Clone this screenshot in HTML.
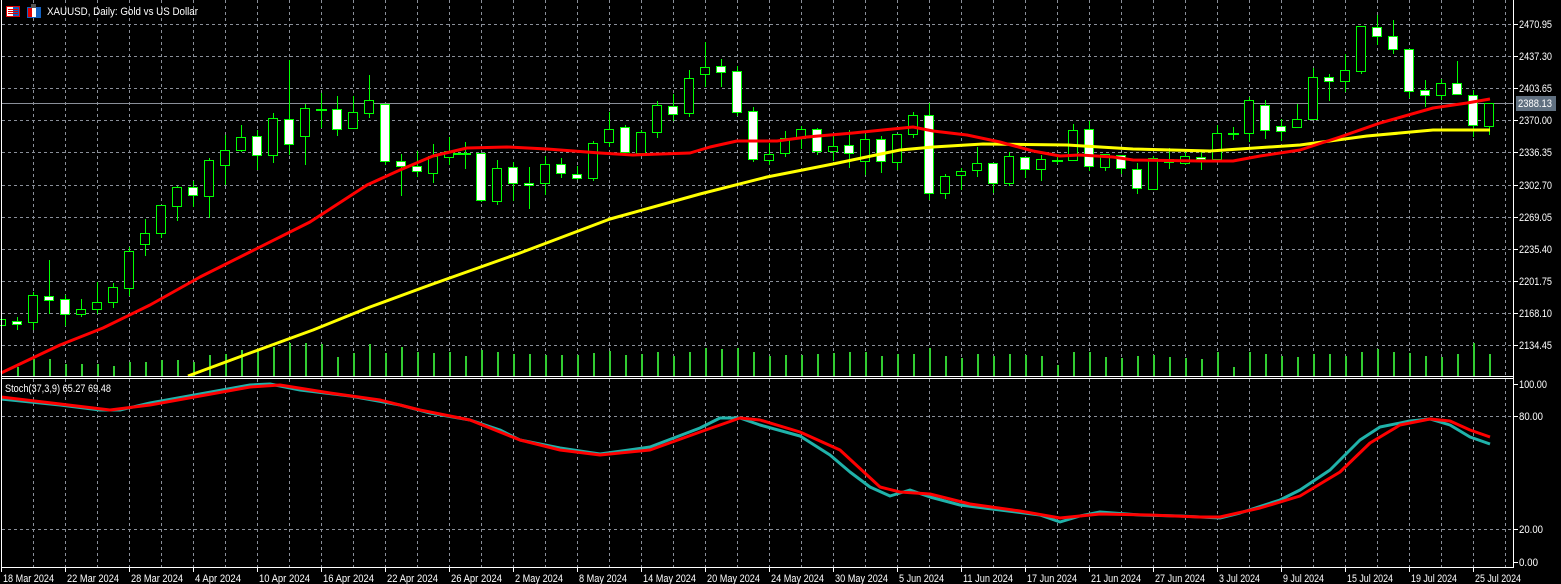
<!DOCTYPE html>
<html><head><meta charset="utf-8"><style>
html,body{margin:0;padding:0;background:#000;width:1561px;height:584px;overflow:hidden}
svg{display:block}
text{font-family:"Liberation Sans",sans-serif;font-size:11px;fill:#fff}
</style></head><body>
<svg width="1561" height="584" viewBox="0 0 1561 584" xmlns="http://www.w3.org/2000/svg" shape-rendering="crispEdges">
<rect width="1561" height="584" fill="#000"/>
<g stroke="#8a8f99" stroke-width="1" stroke-dasharray="3,3">
<path d="M33.5 0V376M65.5 0V376M97.5 0V376M129.5 0V376M161.5 0V376M193.5 0V376M225.5 0V376M257.5 0V376M289.5 0V376M321.5 0V376M353.5 0V376M385.5 0V376M417.5 0V376M449.5 0V376M481.5 0V376M513.5 0V376M545.5 0V376M577.5 0V376M609.5 0V376M641.5 0V376M673.5 0V376M705.5 0V376M737.5 0V376M769.5 0V376M801.5 0V376M833.5 0V376M865.5 0V376M897.5 0V376M929.5 0V376M961.5 0V376M993.5 0V376M1025.5 0V376M1057.5 0V376M1089.5 0V376M1121.5 0V376M1153.5 0V376M1185.5 0V376M1217.5 0V376M1249.5 0V376M1281.5 0V376M1313.5 0V376M1345.5 0V376M1377.5 0V376M1409.5 0V376M1441.5 0V376M1473.5 0V376M1505.5 0V376"/>
<path d="M33.5 379V567M65.5 379V567M97.5 379V567M129.5 379V567M161.5 379V567M193.5 379V567M225.5 379V567M257.5 379V567M289.5 379V567M321.5 379V567M353.5 379V567M385.5 379V567M417.5 379V567M449.5 379V567M481.5 379V567M513.5 379V567M545.5 379V567M577.5 379V567M609.5 379V567M641.5 379V567M673.5 379V567M705.5 379V567M737.5 379V567M769.5 379V567M801.5 379V567M833.5 379V567M865.5 379V567M897.5 379V567M929.5 379V567M961.5 379V567M993.5 379V567M1025.5 379V567M1057.5 379V567M1089.5 379V567M1121.5 379V567M1153.5 379V567M1185.5 379V567M1217.5 379V567M1249.5 379V567M1281.5 379V567M1313.5 379V567M1345.5 379V567M1377.5 379V567M1409.5 379V567M1441.5 379V567M1473.5 379V567M1505.5 379V567"/>
<path d="M2 24.5H1513M2 56.5H1513M2 88.5H1513M2 120.5H1513M2 152.5H1513M2 185.5H1513M2 217.5H1513M2 249.5H1513M2 281.5H1513M2 313.5H1513M2 345.5H1513M2 416.5H1513M2 529.5H1513"/>
</g>
<path d="M2 103.5H1513" stroke="#8a8f99" stroke-width="1"/>
<g fill="#32cd32">
<rect x="17" y="367" width="2" height="9"/><rect x="33" y="359" width="2" height="17"/><rect x="49" y="359" width="2" height="17"/><rect x="65" y="364" width="2" height="12"/><rect x="81" y="364" width="2" height="12"/><rect x="97" y="364" width="2" height="12"/><rect x="113" y="366" width="2" height="10"/><rect x="129" y="362" width="2" height="14"/><rect x="145" y="362" width="2" height="14"/><rect x="161" y="360" width="2" height="16"/><rect x="177" y="360" width="2" height="16"/><rect x="193" y="362" width="2" height="14"/><rect x="209" y="355" width="2" height="21"/><rect x="225" y="354" width="2" height="22"/><rect x="241" y="350" width="2" height="26"/><rect x="257" y="350" width="2" height="26"/><rect x="273" y="347" width="2" height="29"/><rect x="289" y="343" width="2" height="33"/><rect x="305" y="343" width="2" height="33"/><rect x="321" y="344" width="2" height="32"/><rect x="337" y="357" width="2" height="19"/><rect x="353" y="353" width="2" height="23"/><rect x="369" y="344" width="2" height="32"/><rect x="385" y="353" width="2" height="23"/>
<rect x="401" y="347" width="2" height="29"/><rect x="417" y="352" width="2" height="24"/><rect x="433" y="353" width="2" height="23"/><rect x="449" y="352" width="2" height="24"/><rect x="465" y="356" width="2" height="20"/><rect x="481" y="350" width="2" height="26"/><rect x="497" y="352" width="2" height="24"/><rect x="513" y="354" width="2" height="22"/><rect x="529" y="354" width="2" height="22"/><rect x="545" y="355" width="2" height="21"/><rect x="561" y="355" width="2" height="21"/><rect x="577" y="355" width="2" height="21"/><rect x="593" y="353" width="2" height="23"/><rect x="609" y="351" width="2" height="25"/><rect x="625" y="355" width="2" height="21"/><rect x="641" y="354" width="2" height="22"/><rect x="657" y="352" width="2" height="24"/><rect x="673" y="356" width="2" height="20"/><rect x="689" y="352" width="2" height="24"/><rect x="705" y="348" width="2" height="28"/><rect x="721" y="349" width="2" height="27"/><rect x="737" y="348" width="2" height="28"/><rect x="753" y="352" width="2" height="24"/><rect x="769" y="356" width="2" height="20"/><rect x="785" y="355" width="2" height="21"/><rect x="801" y="355" width="2" height="21"/><rect x="817" y="354" width="2" height="22"/><rect x="833" y="353" width="2" height="23"/><rect x="849" y="352" width="2" height="24"/><rect x="865" y="352" width="2" height="24"/><rect x="881" y="356" width="2" height="20"/><rect x="897" y="354" width="2" height="22"/><rect x="913" y="354" width="2" height="22"/><rect x="929" y="348" width="2" height="28"/><rect x="945" y="356" width="2" height="20"/><rect x="961" y="358" width="2" height="18"/><rect x="977" y="354" width="2" height="22"/><rect x="993" y="356" width="2" height="20"/><rect x="1009" y="354" width="2" height="22"/><rect x="1025" y="355" width="2" height="21"/><rect x="1041" y="356" width="2" height="20"/><rect x="1057" y="365" width="2" height="11"/><rect x="1073" y="352" width="2" height="24"/><rect x="1089" y="352" width="2" height="24"/><rect x="1105" y="357" width="2" height="19"/><rect x="1121" y="358" width="2" height="18"/><rect x="1137" y="356" width="2" height="20"/><rect x="1153" y="355" width="2" height="21"/><rect x="1169" y="357" width="2" height="19"/><rect x="1185" y="358" width="2" height="18"/><rect x="1201" y="359" width="2" height="17"/><rect x="1217" y="352" width="2" height="24"/><rect x="1233" y="367" width="2" height="9"/><rect x="1249" y="352" width="2" height="24"/><rect x="1265" y="354" width="2" height="22"/><rect x="1281" y="356" width="2" height="20"/><rect x="1297" y="357" width="2" height="19"/><rect x="1313" y="354" width="2" height="22"/><rect x="1329" y="354" width="2" height="22"/><rect x="1345" y="356" width="2" height="20"/><rect x="1361" y="352" width="2" height="24"/><rect x="1377" y="349" width="2" height="27"/><rect x="1393" y="352" width="2" height="24"/><rect x="1409" y="353" width="2" height="23"/><rect x="1425" y="356" width="2" height="20"/><rect x="1441" y="357" width="2" height="19"/><rect x="1457" y="354" width="2" height="22"/><rect x="1473" y="343" width="2" height="33"/><rect x="1489" y="354" width="2" height="22"/>
</g>
<path stroke="#00ff00" stroke-width="1" fill="none" d="M1.5 318V326M17.5 317V330M33.5 292V330M49.5 260V314M65.5 295V326M81.5 299V317M97.5 282V314M113.5 283V308M129.5 247V296M145.5 219V256M161.5 205V238M177.5 186V221M193.5 181V207M209.5 158V218M225.5 135V185M241.5 125V152M257.5 130V170M273.5 113V163M289.5 60V155M305.5 104V165M321.5 93V128M337.5 96V136M353.5 96V128M369.5 75V118M385.5 104V165M401.5 154V196M417.5 151V177M433.5 144V183M449.5 137V165M465.5 142V169M481.5 153V202M497.5 160V205M513.5 162V201M529.5 167V209M545.5 156V195M561.5 158V178M577.5 166V180M593.5 141V181M609.5 112V147M625.5 125V156M641.5 130V154M657.5 101V138M673.5 94V121M689.5 70V117M705.5 42V87M721.5 59V87M737.5 66V116M753.5 107V162M769.5 143V165M785.5 131V157M801.5 126V149M817.5 128V155M833.5 136V161M849.5 130V168M865.5 134V175M881.5 136V173M897.5 134V170M913.5 112V138M929.5 103V200M945.5 174V199M961.5 168V190M977.5 147V177M993.5 163V193M1009.5 152V186M1025.5 157V178M1041.5 155V181M1057.5 155V164M1073.5 124V160M1089.5 121V171M1105.5 154V171M1121.5 155V174M1137.5 163V194M1153.5 156V190M1169.5 148V169M1185.5 152V165M1201.5 152V170M1217.5 125V160M1233.5 127V140M1249.5 97V142M1265.5 100V139M1281.5 119V141M1297.5 104V128M1313.5 68V119M1329.5 74V101M1345.5 54V92M1361.5 26V74M1377.5 15V45M1393.5 20V54M1409.5 49V98M1425.5 80V107M1441.5 79V100M1457.5 61V95M1473.5 90V137M1489.5 103V135"/>
<path stroke="#00ff00" stroke-width="2" d="M316 110H327M452 154H471M1052 161H1063M1228 134H1239"/>
<g stroke="#00ff00" stroke-width="1" fill="#000">
<rect x="-3.5" y="319.5" width="9" height="6"/><rect x="28.5" y="295.5" width="9" height="27"/><rect x="76.5" y="309.5" width="9" height="5"/><rect x="92.5" y="302.5" width="9" height="7"/><rect x="108.5" y="287.5" width="9" height="15"/><rect x="124.5" y="251.5" width="9" height="37"/><rect x="140.5" y="233.5" width="9" height="11"/><rect x="156.5" y="205.5" width="9" height="28"/><rect x="172.5" y="187.5" width="9" height="19"/><rect x="204.5" y="160.5" width="9" height="36"/><rect x="220.5" y="150.5" width="9" height="15"/><rect x="236.5" y="137.5" width="9" height="13"/><rect x="268.5" y="118.5" width="9" height="37"/><rect x="300.5" y="108.5" width="9" height="28"/><rect x="348.5" y="112.5" width="9" height="16"/><rect x="364.5" y="100.5" width="9" height="13"/><rect x="428.5" y="156.5" width="9" height="17"/><rect x="444.5" y="151.5" width="9" height="6"/><rect x="492.5" y="168.5" width="9" height="33"/><rect x="540.5" y="164.5" width="9" height="19"/><rect x="588.5" y="143.5" width="9" height="35"/><rect x="604.5" y="129.5" width="9" height="13"/><rect x="636.5" y="132.5" width="9" height="21"/><rect x="652.5" y="105.5" width="9" height="27"/><rect x="684.5" y="78.5" width="9" height="35"/><rect x="700.5" y="67.5" width="9" height="7"/><rect x="764.5" y="154.5" width="9" height="6"/><rect x="780.5" y="138.5" width="9" height="15"/><rect x="796.5" y="129.5" width="9" height="9"/><rect x="828.5" y="146.5" width="9" height="5"/><rect x="860.5" y="139.5" width="9" height="22"/><rect x="892.5" y="134.5" width="9" height="28"/><rect x="908.5" y="115.5" width="9" height="19"/><rect x="940.5" y="176.5" width="9" height="17"/><rect x="956.5" y="171.5" width="9" height="4"/><rect x="972.5" y="163.5" width="9" height="7"/><rect x="1004.5" y="156.5" width="9" height="27"/><rect x="1036.5" y="159.5" width="9" height="10"/><rect x="1068.5" y="130.5" width="9" height="30"/><rect x="1100.5" y="154.5" width="9" height="13"/><rect x="1148.5" y="158.5" width="9" height="31"/><rect x="1164.5" y="159.5" width="9" height="3"/><rect x="1180.5" y="156.5" width="9" height="7"/><rect x="1212.5" y="133.5" width="9" height="26"/><rect x="1244.5" y="100.5" width="9" height="33"/><rect x="1292.5" y="119.5" width="9" height="8"/><rect x="1308.5" y="77.5" width="9" height="42"/><rect x="1340.5" y="70.5" width="9" height="11"/><rect x="1356.5" y="26.5" width="9" height="45"/><rect x="1436.5" y="83.5" width="9" height="12"/><rect x="1484.5" y="103.5" width="9" height="23"/>
</g>
<g stroke="#00ff00" stroke-width="1" fill="#fff">
<rect x="12.5" y="321.5" width="9" height="3"/><rect x="44.5" y="296.5" width="9" height="4"/><rect x="60.5" y="299.5" width="9" height="15"/><rect x="188.5" y="187.5" width="9" height="8"/><rect x="252.5" y="136.5" width="9" height="19"/><rect x="284.5" y="119.5" width="9" height="25"/><rect x="332.5" y="109.5" width="9" height="20"/><rect x="380.5" y="104.5" width="9" height="57"/><rect x="396.5" y="161.5" width="9" height="5"/><rect x="412.5" y="166.5" width="9" height="5"/><rect x="476.5" y="153.5" width="9" height="47"/><rect x="508.5" y="167.5" width="9" height="16"/><rect x="524.5" y="183.5" width="9" height="2"/><rect x="556.5" y="164.5" width="9" height="9"/><rect x="572.5" y="174.5" width="9" height="4"/><rect x="620.5" y="127.5" width="9" height="25"/><rect x="668.5" y="106.5" width="9" height="8"/><rect x="716.5" y="66.5" width="9" height="6"/><rect x="732.5" y="71.5" width="9" height="41"/><rect x="748.5" y="111.5" width="9" height="48"/><rect x="812.5" y="129.5" width="9" height="22"/><rect x="844.5" y="145.5" width="9" height="8"/><rect x="876.5" y="139.5" width="9" height="22"/><rect x="924.5" y="115.5" width="9" height="78"/><rect x="988.5" y="163.5" width="9" height="20"/><rect x="1020.5" y="157.5" width="9" height="12"/><rect x="1084.5" y="129.5" width="9" height="37"/><rect x="1116.5" y="155.5" width="9" height="13"/><rect x="1132.5" y="169.5" width="9" height="19"/><rect x="1196.5" y="157.5" width="9" height="2"/><rect x="1260.5" y="105.5" width="9" height="25"/><rect x="1276.5" y="126.5" width="9" height="5"/><rect x="1324.5" y="77.5" width="9" height="4"/><rect x="1372.5" y="27.5" width="9" height="9"/><rect x="1388.5" y="36.5" width="9" height="13"/><rect x="1404.5" y="49.5" width="9" height="42"/><rect x="1420.5" y="90.5" width="9" height="5"/><rect x="1452.5" y="83.5" width="9" height="11"/><rect x="1468.5" y="95.5" width="9" height="30"/>
</g>
<g fill="none" stroke-width="3" shape-rendering="auto" stroke-linejoin="round">
<polyline stroke="#ffff00" points="188,376 250,353 313,330 370,307 430,285 520,253 610,219 700,194 767,177 833,164 900,150 933,147 983,144 1067,145 1133,149 1210,151 1300,145 1367,136 1433,130 1490,130"/>
<polyline stroke="#ff0000" points="1,373 60,345 103,328 150,305 200,277 250,252 310,222 367,185 400,170 433,156 467,148 507,147 547,149 600,153 633,155 690,153 710,147 737,141 777,141 807,137 853,133 913,127 933,131 967,135 1000,142 1033,151 1060,156 1080,155 1113,157 1133,160 1200,161 1233,161 1260,156 1300,150 1340,137 1380,123 1433,108 1467,103 1490,99"/>
</g>
<g fill="none" stroke-width="3" shape-rendering="auto" stroke-linejoin="round">
<polyline stroke="#20b2aa" points="1,399 60,405 100,410 120,410 150,403 200,394 250,385 270,384 300,390 350,396 400,405 430,413 470,420 500,430 520,440 560,448 600,454 650,447 700,428 720,418 740,418 760,425 800,436 830,455 850,472 870,487 890,496 910,490 930,497 960,505 1000,510 1040,515 1060,522 1080,516 1100,512 1140,515 1180,516 1220,518 1240,513 1280,500 1300,490 1330,470 1360,440 1380,427 1410,421 1430,419 1450,425 1470,437 1490,444"/>
<polyline stroke="#ff0000" points="1,397 60,404 110,410 150,405 200,396 250,387 280,385 330,393 380,400 420,410 470,420 520,440 560,450 600,455 650,450 700,432 740,418 760,420 800,432 840,450 880,487 900,492 930,494 970,504 1020,511 1060,518 1100,514 1150,515 1200,517 1220,517 1260,508 1300,496 1340,472 1370,443 1400,425 1430,419 1450,421 1470,430 1490,437"/>
</g>
<g stroke="#fff" stroke-width="1">
<path d="M1.5 0V568M1513.5 0V568M1 376.5H1514M1 378.5H1514M1 567.5H1514"/>
<path d="M1514 24.5H1518M1514 56.5H1518M1514 88.5H1518M1514 120.5H1518M1514 152.5H1518M1514 185.5H1518M1514 217.5H1518M1514 249.5H1518M1514 281.5H1518M1514 313.5H1518M1514 345.5H1518M1514 384.5H1518M1514 416.5H1518M1514 529.5H1518M1514 562.5H1518"/>
<path d="M1.5 568V572M65.5 568V572M129.5 568V572M193.5 568V572M257.5 568V572M321.5 568V572M385.5 568V572M449.5 568V572M513.5 568V572M577.5 568V572M641.5 568V572M705.5 568V572M769.5 568V572M833.5 568V572M897.5 568V572M961.5 568V572M1025.5 568V572M1089.5 568V572M1153.5 568V572M1217.5 568V572M1281.5 568V572M1345.5 568V572M1409.5 568V572M1473.5 568V572"/>
</g>
<g lengthAdjust="spacingAndGlyphs">
<text x="1519" y="28" textLength="33" lengthAdjust="spacingAndGlyphs">2470.95</text><text x="1519" y="60" textLength="33" lengthAdjust="spacingAndGlyphs">2437.30</text><text x="1519" y="92" textLength="33" lengthAdjust="spacingAndGlyphs">2403.65</text><text x="1519" y="124" textLength="33" lengthAdjust="spacingAndGlyphs">2370.00</text><text x="1519" y="156" textLength="33" lengthAdjust="spacingAndGlyphs">2336.35</text><text x="1519" y="189" textLength="33" lengthAdjust="spacingAndGlyphs">2302.70</text><text x="1519" y="221" textLength="33" lengthAdjust="spacingAndGlyphs">2269.05</text><text x="1519" y="253" textLength="33" lengthAdjust="spacingAndGlyphs">2235.40</text><text x="1519" y="285" textLength="33" lengthAdjust="spacingAndGlyphs">2201.75</text><text x="1519" y="317" textLength="33" lengthAdjust="spacingAndGlyphs">2168.10</text><text x="1519" y="349" textLength="33" lengthAdjust="spacingAndGlyphs">2134.45</text>
<text x="1519" y="388" textLength="28" lengthAdjust="spacingAndGlyphs">100.00</text><text x="1519" y="420" textLength="24" lengthAdjust="spacingAndGlyphs">80.00</text><text x="1519" y="533" textLength="24" lengthAdjust="spacingAndGlyphs">20.00</text><text x="1519" y="566" textLength="19" lengthAdjust="spacingAndGlyphs">0.00</text>
</g>
<rect x="1516" y="96" width="40" height="15" fill="#607080"/>
<text x="1518" y="107" textLength="34" lengthAdjust="spacingAndGlyphs">2388.13</text>
<g>
<text x="3" y="582" textLength="51" lengthAdjust="spacingAndGlyphs">18 Mar 2024</text><text x="67" y="582" textLength="52" lengthAdjust="spacingAndGlyphs">22 Mar 2024</text><text x="131" y="582" textLength="52" lengthAdjust="spacingAndGlyphs">28 Mar 2024</text><text x="195" y="582" textLength="46" lengthAdjust="spacingAndGlyphs">4 Apr 2024</text><text x="259" y="582" textLength="51" lengthAdjust="spacingAndGlyphs">10 Apr 2024</text><text x="323" y="582" textLength="51" lengthAdjust="spacingAndGlyphs">16 Apr 2024</text><text x="387" y="582" textLength="51" lengthAdjust="spacingAndGlyphs">22 Apr 2024</text><text x="451" y="582" textLength="51" lengthAdjust="spacingAndGlyphs">26 Apr 2024</text><text x="515" y="582" textLength="48" lengthAdjust="spacingAndGlyphs">2 May 2024</text><text x="579" y="582" textLength="48" lengthAdjust="spacingAndGlyphs">8 May 2024</text><text x="643" y="582" textLength="53" lengthAdjust="spacingAndGlyphs">14 May 2024</text><text x="707" y="582" textLength="53" lengthAdjust="spacingAndGlyphs">20 May 2024</text><text x="771" y="582" textLength="53" lengthAdjust="spacingAndGlyphs">24 May 2024</text><text x="835" y="582" textLength="53" lengthAdjust="spacingAndGlyphs">30 May 2024</text><text x="899" y="582" textLength="45" lengthAdjust="spacingAndGlyphs">5 Jun 2024</text><text x="963" y="582" textLength="50" lengthAdjust="spacingAndGlyphs">11 Jun 2024</text><text x="1027" y="582" textLength="50" lengthAdjust="spacingAndGlyphs">17 Jun 2024</text><text x="1091" y="582" textLength="50" lengthAdjust="spacingAndGlyphs">21 Jun 2024</text><text x="1155" y="582" textLength="50" lengthAdjust="spacingAndGlyphs">27 Jun 2024</text><text x="1219" y="582" textLength="41" lengthAdjust="spacingAndGlyphs">3 Jul 2024</text><text x="1283" y="582" textLength="41" lengthAdjust="spacingAndGlyphs">9 Jul 2024</text><text x="1347" y="582" textLength="46" lengthAdjust="spacingAndGlyphs">15 Jul 2024</text><text x="1411" y="582" textLength="46" lengthAdjust="spacingAndGlyphs">19 Jul 2024</text><text x="1475" y="582" textLength="46" lengthAdjust="spacingAndGlyphs">25 Jul 2024</text>
</g>
<g>
<rect x="6.5" y="6.5" width="13" height="10" fill="#fff" stroke="#e00000"/>
<rect x="13" y="7" width="6" height="9" fill="#1060c0"/>
<path d="M8 9.5H18M8 11.5H18M8 13.5H18" stroke="#e00000"/>
<rect x="27.5" y="7.5" width="13" height="10" fill="#fff" stroke="#1060c0"/>
<rect x="31" y="4" width="5" height="4" fill="#555"/>
<rect x="28" y="8" width="4" height="9" fill="#e00000"/>
<rect x="36" y="8" width="4" height="9" fill="#1060c0"/>
</g>
<text x="47" y="15" textLength="151" lengthAdjust="spacingAndGlyphs">XAUUSD, Daily:  Gold vs US Dollar</text>
<text x="5" y="392" textLength="106" lengthAdjust="spacingAndGlyphs">Stoch(37,3,9) 65.27 69.48</text>
</svg>
</body></html>
